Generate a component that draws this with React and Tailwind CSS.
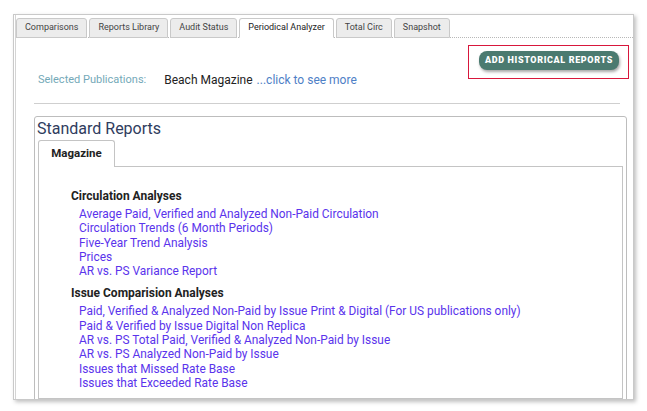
import React from 'react';

const tabs = ['Comparisons', 'Reports Library', 'Audit Status', 'Periodical Analyzer', 'Total Circ', 'Snapshot'];

const sections = [
  {
    title: 'Circulation Analyses',
    links: [
      'Average Paid, Verified and Analyzed Non-Paid Circulation',
      'Circulation Trends (6 Month Periods)',
      'Five-Year Trend Analysis',
      'Prices',
      'AR vs. PS Variance Report',
    ],
  },
  {
    title: 'Issue Comparision Analyses',
    links: [
      'Paid, Verified & Analyzed Non-Paid by Issue Print & Digital (For US publications only)',
      'Paid & Verified by Issue Digital Non Replica',
      'AR vs. PS Total Paid, Verified & Analyzed Non-Paid by Issue',
      'AR vs. PS Analyzed Non-Paid by Issue',
      'Issues that Missed Rate Base',
      'Issues that Exceeded Rate Base',
    ],
  },
];

export default function App() {
  return (
    <div className="w-[647px] h-[411px] bg-white pt-[14px] pl-[13px] font-['Roboto',sans-serif] overflow-hidden">
      <div className="w-[621px] h-[386px] border border-[#c9c9c9] shadow-[2px_2px_4px_rgba(0,0,0,0.25)] overflow-hidden">
        <div className="h-full ml-[1px] border-l border-[#d4d4d4] flex flex-col">
          {/* top tabs */}
          <div className="flex gap-[2px] pt-[3px] border-b border-dotted border-[#b8b8b8]">
            {tabs.map((t) => (
              <TopTab key={t} label={t} active={t === 'Periodical Analyzer'} />
            ))}
          </div>

          <div className="relative pl-[22px] pr-[12px]">
            <div className="absolute left-[452px] top-[7px] w-[161px] h-[34px] border border-[#d8173c]" />
            <div className="flex justify-end pt-[13px] pr-[2px]">
              <button className="h-[19px] px-[6px] rounded-[8px] bg-[#4b7a70] text-white text-[9px] font-black tracking-[0.07em] shadow-[1px_2px_3px_rgba(0,0,0,0.35)]">
                ADD HISTORICAL REPORTS
              </button>
            </div>
            <div className="flex items-center h-[12px] mt-[4px]">
              <span className="text-[11px] text-[#74a9b8]">Selected Publications:</span>
              <span className="ml-[18px] text-[12px] text-[#222]">Beach Magazine</span>
              <span className="ml-[4px] text-[12px] text-[#4e80c6]">...click to see more</span>
            </div>
            <div className="mt-[17px] ml-[-4px] mr-[1px] border-t border-[#cfcfcf]" />
          </div>

          <div className="ml-[18px] mr-[6px] mt-[12px] flex-1 border border-[#bdbdbd] rounded-t-[3px] flex flex-col">
            <div className="text-[16px] leading-[20px] text-[#2f3c5e] pl-[2px] pt-[2px]">Standard Reports</div>
            <div className="ml-[3px] mt-[1px] flex">
              <div className="w-[77px] h-[27px] border border-b-0 border-[#c4c4c4] rounded-t-[3px] bg-white flex items-center justify-center text-[11.5px] font-bold text-[#222] relative z-10 mb-[-1px]">
                Magazine
              </div>
            </div>
            <div className="ml-[3px] mr-[3px] flex-1 border border-[#c4c4c4] pl-[32px] pt-[22px]">
              {sections.map((s) => (
                <div key={s.title} className="mb-[8px]">
                  <div className="text-[12px] font-bold text-[#222] leading-[15px] mb-[3px]">{s.title}</div>
                  <div className="pl-[8px] flex flex-col">
                    {s.links.map((l) => (
                      <a key={l} className="text-[11.9px] leading-[14.3px] text-[#5a34ec] whitespace-nowrap">
                        {l}
                      </a>
                    ))}
                  </div>
                </div>
              ))}
            </div>
          </div>
        </div>
      </div>
    </div>
  );
}

function TopTab({ label, active }) {
  return (
    <div
      className={`h-[20px] px-[8px] flex items-center text-[9px] rounded-t-[3px] border border-[#c9c9c9] mb-[-1px] ${
        active ? 'bg-white border-b-white text-[#222]' : 'bg-[#ececec] text-[#444]'
      }`}
    >
      {label}
    </div>
  );
}
